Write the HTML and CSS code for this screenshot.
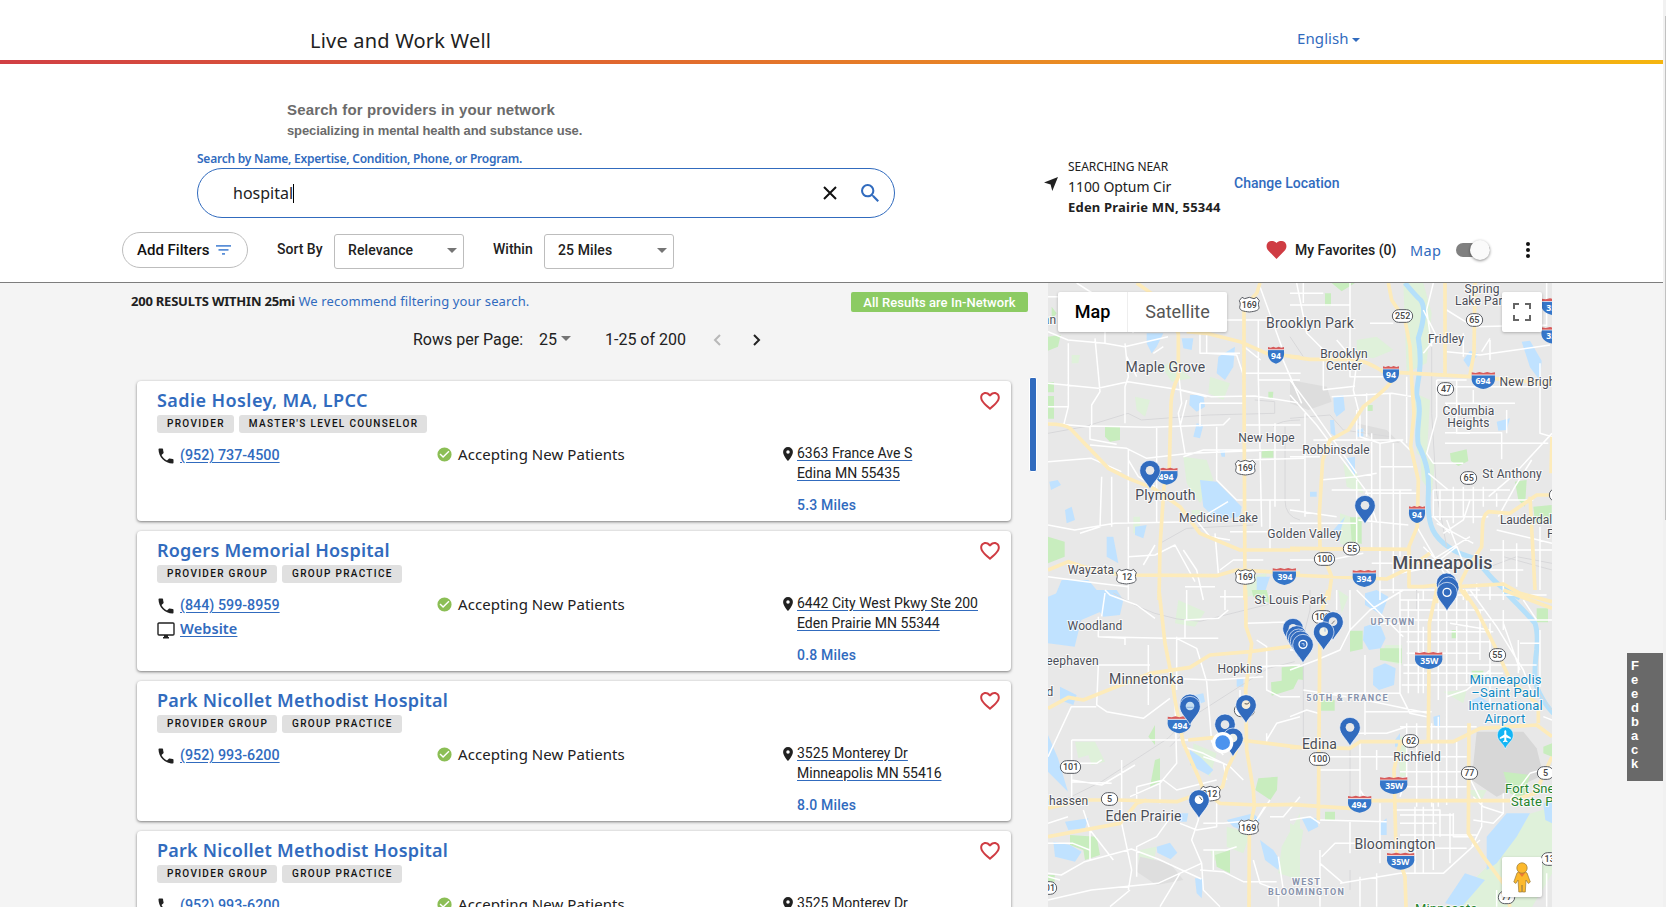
FILE: index.html
```html
<!DOCTYPE html>
<html lang="en">
<head>
<meta charset="utf-8">
<title>Live and Work Well</title>
<link rel="stylesheet" href="styles.css">
</head>
<body>
<svg class="defs" aria-hidden="true">
  <symbol id="phone" viewBox="0 0 24 24"><path d="M6.6 10.8c1.4 2.8 3.8 5.1 6.6 6.6l2.2-2.2c.3-.3.7-.4 1-.2 1.1.4 2.3.6 3.6.6.6 0 1 .4 1 1V20c0 .6-.4 1-1 1C10.600 21 3 13.400 3 4c0-.6.4-1 1-1h3.500c.6 0 1 .4 1 1 0 1.300.2 2.500.6 3.600.1.300 0 .7-.2 1z"/></symbol>
  <symbol id="check" viewBox="0 0 24 24"><path d="M12 2a10 10 0 1 0 0 20 10 10 0 0 0 0-20zm-2 15-5-5 1.400-1.400 3.600 3.600 7.600-7.600L19 8z"/></symbol>
  <symbol id="place" viewBox="5 2 14 20"><path d="M12 2a7 7 0 0 0-7 7c0 5.250 7 13 7 13s7-7.750 7-13a7 7 0 0 0-7-7zm0 9.500a2.500 2.500 0 1 1 0-5 2.500 2.500 0 0 1 0 5z"/></symbol>
  <symbol id="monitor" viewBox="0 0 18 17"><path d="M2 1h14a1 1 0 0 1 1 1v10a1 1 0 0 1-1 1H2a1 1 0 0 1-1-1V2a1 1 0 0 1 1-1z" fill="none" stroke="#212121" stroke-width="1.400"/><path d="M7 13h4v2h1v1.500H6V15h1z"/></symbol>
  <symbol id="heart-o" viewBox="2 3 20 18.350"><path d="M16.500 3c-1.740 0-3.410.81-4.500 2.090C10.910 3.810 9.240 3 7.500 3 4.420 3 2 5.420 2 8.500c0 3.780 3.400 6.860 8.550 11.540L12 21.350l1.450-1.320C18.600 15.360 22 12.280 22 8.500 22 5.420 19.580 3 16.500 3zm-4.400 15.550-.1.1-.1-.1C7.140 14.240 4 11.390 4 8.500 4 6.500 5.500 5 7.500 5c1.540 0 3.040.99 3.570 2.360h1.870C13.460 5.990 14.960 5 16.500 5c2 0 3.500 1.500 3.500 3.500 0 2.890-3.140 5.740-7.900 10.050z"/></symbol>
</svg>

<header class="top">
  <div class="brand">Live and Work Well</div>
  <div class="lang">English<i class="caret"></i></div>
</header>
<div class="rainbow"></div>

<section class="search">
  <div class="search-left">
    <h1 class="headline">Search for providers in your network</h1>
    <p class="subline">specializing in mental health and substance use.</p>
    <div class="field-label">Search by Name, Expertise, Condition, Phone, or Program.</div>
    <div class="field"><span class="query">hospital</span><span class="cursor"></span>
      <svg class="clear" viewBox="0 0 14 14"><path d="M1 1l12 12M13 1L1 13"/></svg>
      <svg class="magnify" viewBox="3 3 17.500 17.500"><path d="M15.500 14h-.79l-.28-.27A6.470 6.470 0 0 0 16 9.500 6.500 6.500 0 1 0 9.500 16c1.610 0 3.090-.59 4.230-1.570l.27.28v.79l5 4.990L20.490 19zm-6 0A4.500 4.500 0 1 1 14 9.500 4.490 4.490 0 0 1 9.500 14z"/></svg>
    </div>
    <div class="filters">
      <button class="add">Add Filters<svg viewBox="0 0 15 10"><path d="M0 0h15v1.700H0zM2.500 4h10v1.700h-10zM6 8h3v1.700H6z"/></svg></button>
      <span class="flabel sort">Sort By</span><div class="select">Relevance<i class="tri"></i></div>
      <span class="flabel within">Within</span><div class="select">25 Miles<i class="tri"></i></div>
    </div>
  </div>
  <div class="search-right">
    <div class="location">
      <svg class="arrow" viewBox="0 0 14 14"><path d="M14 0L8.300 14 6.600 7.400 0 5.500z"/></svg>
      <div class="near"><div class="near-t">SEARCHING NEAR</div><div class="near-a">1100 Optum Cir</div><div class="near-c">Eden Prairie MN, 55344</div></div>
      <a class="change">Change Location</a>
    </div>
    <div class="tools">
      <svg class="heart" viewBox="0 0 20 18"><path d="M10 18L1.500 9.300C-.7 6.500-.3 2.500 2.300.8 5-.8 8.200-.1 10 2.100 11.800-.1 15-.8 17.700.8c2.600 1.700 3 5.700.8 8.500z"/></svg>
      <span class="fav">My Favorites (0)</span><span class="map-l">Map</span>
      <span class="toggle"><i></i></span>
      <span class="dots"><i></i><i></i><i></i></span>
    </div>
  </div>
</section>

<main class="results">
  <div class="list">
    <div class="summary"><div class="count"><b>200 RESULTS WITHIN 25mi</b> <span>We recommend filtering your search.</span></div><div class="badge">All Results are In-Network</div></div>
    <div class="pager"><span class="rpp">Rows per Page:</span><span class="num">25</span><i class="tri"></i><span class="range">1-25 of 200</span>
      <svg class="prev" viewBox="0 0 8 12"><path d="M7 1L2 6l5 5"/></svg><svg class="next" viewBox="0 0 8 12"><path d="M1 1l5 5-5 5"/></svg></div>
    <div class="cards">
      <article class="card">
        <svg class="fav-o"><use href="#heart-o"/></svg>
        <h2 class="wide">Sadie Hosley, MA, LPCC</h2>
        <div class="tags"><span>PROVIDER</span><span>MASTER'S LEVEL COUNSELOR</span></div>
        <div class="info"><div class="contact"><div class="row"><svg class="ph"><use href="#phone"/></svg><a>(952) 737-4500</a></div></div>
          <div class="accept"><svg><use href="#check"/></svg>Accepting New Patients</div>
          <div class="addr"><svg><use href="#place"/></svg><div><a>6363 France Ave S</a><a>Edina MN 55435</a><b>5.3 Miles</b></div></div></div>
      </article>
      <article class="card">
        <svg class="fav-o"><use href="#heart-o"/></svg>
        <h2>Rogers Memorial Hospital</h2>
        <div class="tags"><span>PROVIDER GROUP</span><span>GROUP PRACTICE</span></div>
        <div class="info"><div class="contact"><div class="row"><svg class="ph"><use href="#phone"/></svg><a>(844) 599-8959</a></div><div class="row web"><svg class="mon"><use href="#monitor"/></svg><a>Website</a></div></div>
          <div class="accept"><svg><use href="#check"/></svg>Accepting New Patients</div>
          <div class="addr"><svg><use href="#place"/></svg><div><a>6442 City West Pkwy Ste 200</a><a>Eden Prairie MN 55344</a><b>0.8 Miles</b></div></div></div>
      </article>
      <article class="card">
        <svg class="fav-o"><use href="#heart-o"/></svg>
        <h2>Park Nicollet Methodist Hospital</h2>
        <div class="tags"><span>PROVIDER GROUP</span><span>GROUP PRACTICE</span></div>
        <div class="info"><div class="contact"><div class="row"><svg class="ph"><use href="#phone"/></svg><a>(952) 993-6200</a></div></div>
          <div class="accept"><svg><use href="#check"/></svg>Accepting New Patients</div>
          <div class="addr"><svg><use href="#place"/></svg><div><a>3525 Monterey Dr</a><a>Minneapolis MN 55416</a><b>8.0 Miles</b></div></div></div>
      </article>
      <article class="card">
        <svg class="fav-o"><use href="#heart-o"/></svg>
        <h2>Park Nicollet Methodist Hospital</h2>
        <div class="tags"><span>PROVIDER GROUP</span><span>GROUP PRACTICE</span></div>
        <div class="info"><div class="contact"><div class="row"><svg class="ph"><use href="#phone"/></svg><a>(952) 993-6200</a></div></div>
          <div class="accept"><svg><use href="#check"/></svg>Accepting New Patients</div>
          <div class="addr"><svg><use href="#place"/></svg><div><a>3525 Monterey Dr</a></div></div></div>
      </article>
    </div>
  </div>
  <div class="rail"><div class="thumb"></div></div>
  <div class="map">
    <svg class="canvas" viewBox="1048 283 504 624">
      <defs>
        <g id="pin"><path d="M0 85C-9 66-31 50-31 30a31 31 0 0 1 62 0C31 50 9 66 0 85z" class="pinb"/></g>
        <g id="ints"><path d="M-24 -14h48v6c2 20-8 32-24 36-16-4-26-16-24-36z" fill="#3576c9"/><path d="M-24 -14v-8l8 2 8-3 8 3 8-3 8 3 8-2v8z" fill="#d75b5b"/><path d="M-24 -14h48" stroke="#fff" stroke-width="2"/></g>
        <g id="us"><path d="M-22 -22l8 4 14-4 14 4 8-4 8 10c-5 10-2 14-1 20 0 10-12 12-29 14-17-2-29-4-29-14 1-6 4-10-1-20z" class="shield"/></g>
      </defs>
      <rect x="1048" y="283" width="504" height="624" fill="#e8e8e8"/>

      <!-- terrain: parks and water -->
      <g transform="translate(1040 280) scale(.33333)">
        <path class="lg" d="M430 530l70 10 20 60-40 70-40-60zM510 290l60 20-20 50-45-20zM285 350l45 10-15 50-25-20zM95 225l25 0-5 25-20 0zM365 260l30-15 60 50-60 10zM455 690l30 0-5 40-25-10zM280 710h20v50h-20zM620 890l60-10-10 60-50 10z"/>
        <path class="pk" d="M24 170l38-5-8 35-30 12zM24 307h18v30H24zM24 348h18v68H24zM195 440h45v40l-30 5-15-15zM24 770l50 15v45l-50 20zM35 80l15 20-15 20zM665 508h35v25h-35zM685 335h15l-2 22-13-4z"/>
        <path class="wt" d="M535 230l50-30-5 60-25 40-25-20zM450 345h40l5 35-25 15-22-20zM320 160l50 0-20 40-15 20-15-30zM425 175l35 0-5 35-25-5zM480 600l50 5 75 75-5 30-70 10-40-40zM470 430l20 5-10 40-20-5zM75 690l20-10 10 40-25 10zM28 605l25-5 10 15-30 15zM285 740l35-5-10 40-25-10zM200 770l20 0 15 80-35-20zM65 900l80 0 50 60H40zM650 890l40 0-20 60-20-20zM540 510l15 0 0 20-10 0z"/>
      </g>
      <g transform="translate(1290 280) scale(.33333)">
        <path d="M0 300l110 20 15 45-70 25L0 370zM200 430l90 20 40 40-80-10z" fill="#ddd"/>
        <path class="lg" d="M200 180l60-10 50 40-60 25-50-10zM340 9h60l25 90-15 150-60 30zM375 340l45 20-10 180-30-20zM390 520l45 30-10 90-30-40zM160 550l40 30 20 60-50-20zM150 700l60 20v100l-60-30z"/>
        <path class="pk" d="M125 9h70l-40 25zM480 520l50-12 5 35-30 15-22-15zM675 605l35-5-5 80-20-20zM180 712h35v80l-30-10zM730 680l55-5v55h-50zM232 375h16v18h-16zM105 40h18v38h-18z"/>
        <path class="wt" d="M130 350l30-5 5 45-25 20-8-15zM120 420l12 0 5 50-15-10zM695 185l25-3 35 60-5 60-30-40zM520 240l20-28 25 10-30 40zM620 425l40-10-10 35-25 2zM165 535l30-5 0 60-15-30zM200 450l20-5 0 25-18 0zM60 635h20v15H60zM130 750l35-40-20 60-10 10z"/>
        <path class="riv" d="M345 9q25 30 40 45c30 20 10 90 0 120 15 90-5 130-5 170 20 50-5 100 5 150 30 60 32 100 30 150-5 100 20 130 65 160 40 30 80 20 90 50 30 30 40 60 120 100"/>
      </g>
      <g transform="translate(1040 590) scale(.33333)">
        <path class="lg" d="M105 455l60 0 30 60-40 10-10-30-30 10zM415 30l80 35-30 45-60-10zM300 780l50-10-10 50-45-10zM460 460l70 30-20 70-50-50zM725 770l55-100v200l-65-20zM510 780l40 0 10 40-40-10zM560 710l70 20-20 60-50-20z"/>
        <path class="pk" d="M725 232l55-5v30l-20 40-65 20-2-40 32-5zM655 565l58-5-2 40-20 30-45-30zM325 440l20-35 0 60zM345 510l15-5 0 70-30 15zM90 735l80 5 10 55-45 15-5-30-40-15zM525 795l45-15 0 70-40-20zM24 855h20v20H24zM635 0l45 0 10 40-50-20z"/>
        <path class="wt" d="M24 20l50-20h120l0 60-70 30-20 80-80-10zM60 290l50 25-10 30-40-15zM130 0h100l20 30-10 45-50 5zM24 435l30 70 30 100-60-60zM450 480l30 20 40 40-15 15-55-30zM40 755l50 10 35 20-20 30-60-15zM350 770l40-12 22 30-20 20-40-20zM660 750l40 30 20 30-5 30-40-30zM560 690l80-20 20 20-30 40-50-20zM465 315l25-5 5 25-25 10zM590 265h20v25h-20zM465 865h25l-5 60-15-15zM75 695l70-10-10 30-50 5zM415 670l30 0-5 25-25 0z"/>
        <path d="M300 800l90 20 40 50-80 15-60-40z" fill="#dedede"/>
      </g>
      <g transform="translate(1290 590) scale(.33333)">
        <path d="M560 425h140l40 50 20 80-140 65-75-50z" fill="#d7d7d7"/>
        <path class="lg" d="M0 700l40 20-10 60-30 90zM285 165h50v60l-60-15zM530 600l60 0-20 40zM500 951l60-90 100-100 60-90 66-20v200l-60 100zM320 440l30 0 0 120-20 0zM460 305l70-5-10 40zM145 0l30 20-20 50z"/>
        <path class="pk" d="M180 122h38v55l-38 8zM0 230l40 0 0 40-40-5zM270 175h65v45l-65-10zM92 330h42v32H92zM740 55h34v42h-34zM545 242h35v22h-35zM640 545l80 10-20 75-40-20zM760 470l26-10v40l-26-10zM105 665h30v25h-30zM485 120h15v25h-15z"/>
        <path class="wt" d="M222 110l45-15 20 50-15 30-35 5-18-30zM250 235l35-15 32 15-5 50-45 15-18-15zM225 10l35-10 35 20-20 55-50-30zM430 380l20-5 0 40-18-10zM545 330l25-10 30 20-20 20-30 0zM590 740l60-70 70 0-40 70-60 80-30 20zM465 940l60-90 60 20-70 81zM35 685l45 0 5 25-30 15zM270 700l20-15 0 50-20 0zM760 640l26-10v70l-20-10zM315 450l15-20 0 40-15 0z"/>
        <path class="riv" d="M640 0q80 80 95 100 10 30 5 80-10 80 0 110 20 50 50 80"/>
      </g>

      <!-- local streets -->
      <g class="st" transform="translate(1040 280) scale(.33333)">
        <path class="rail-l" d="M24 460l110-20 130-40 40 20 200-15 200-5 0-35-60-5M700 440q20-20 80-20M735 440v220q0 50 45 60M360 790l80-45 200-10"/>
        <path d="M24 310l150 15 90-20 160 25 90 20 130-2 130 20M24 155l60 25 110 10 60 10 130-30M85 190v190l-15 60M255 190l10 100-10 30v110M155 435v-60l25-40-15-160M110 9l140 90 30 60M24 50h100l50 60M150 438l180 4 220-8 20-20M150 438l0 40 80 15M24 545l130-10 90 40M150 495l110 10 60 30 130-15 250-10M265 510v220M350 440v290M24 735l80 15 120-20 240-5 100-60M185 590l-5 150-60 20M215 590v150M265 540l30 50 50 30M265 740v90l80-5 60-30 60 110M265 830v130M310 855l35-60M430 810l40 60 20 90M430 530l60-20 300 0M530 440v160l60 60h190M500 160l0 60 90 5 20 60M560 120h220M480 160v60h120M612 280h170M655 120v180h125M655 290l10 450M705 430v250M725 230l60 140M612 540l180-5M660 20l65 180M415 270l10 100-10 30 20 120M420 330l80 20M440 360l-20 80M260 230l30 60M340 220l30-20M480 370h130M480 370v70M612 435h170M24 430l126 10M570 780l-60-10-50-60M570 755h200M690 660v150M540 870l40-30h90M24 890l150 20 90 10M435 920h90M525 760l10 120M24 380h60M612 200l50 40M195 100v90"/>
      </g>
      <g class="st" transform="translate(1290 280) scale(.33333)">
        <path class="rail-l" d="M0 415l120-10 40 45 140 20M425 200v200l15 240 30 160M640 830l146 40M600 860l80-30 106 20M0 170l40 60"/>
        <path d="M40 9v60M0 40h100M180 9v220M0 75h180M20 9l30 150 50 50 0 90 0 30 95-10M140 180l60 70-10 80 20 80 0 60 60 20 60-10 30 30M0 345l80 90 150 200 30 90M0 300l60 80 140 200M45 400v310M0 530h90M70 480h270M245 460v350M270 490v470M310 490v450M330 630v200M90 600l110-10 60-10M125 630h240M200 600v200M225 640h160M270 560h100M125 350l180-10 65 10M230 340v130M300 340v140M430 9l-20 80 15 110M400 90l40 80-40 50M470 90l80 50 220-5M470 215l100 10 210-30M520 160v70M600 180v60M575 215l25-40M440 300h90M440 300v110l-30 110 20 30 90 0M500 300l0 160h40M465 320h280M465 370h210M550 330v40M465 458h170v80M465 490h310M750 250v210l36 10M786 460l-120 130-70 60M650 390l0 70M725 540l-50 80-50 90M430 630h230M430 660h300M430 630l0 80 50 50M450 630v90M490 620v110M520 620v90M550 620v110M580 620v60M620 640v40M415 580l60 50M425 710h170M440 730l110 60M460 760l60-40 20-60M380 740l100 170M400 800l100 100M430 860l-100 20M470 720l50 130M540 770l-130 80M500 800l-90 70M0 840l120 0 100-20M245 850h150M205 720l150 15M0 690l140 20M0 730h200M400 930v30M440 930v30M480 930v30M520 930v30M560 910v50M600 910v50M640 920v40M270 930h300M440 945h330M620 750l166 40M640 780v140M680 790v130M600 810h186M600 870h100M750 740v190M200 480v-90M180 240l0 50 100 0M470 390l0-20M350 290v200M240 130h70M770 9v130"/>
      </g>
      <g class="st" transform="translate(1040 590) scale(.33333)">
        <path class="rail-l" d="M220 9q120 80 260 85l300-75M24 655l160-80 200-130 50-50 250-160 80-20M390 470l60-60"/>
        <path d="M195 0l15 15 80 30 55 40M195 9l-10 70M175 80v60l80 5 0 20M175 140l200 5 160 0M175 225h155M175 225l-5 120 30 20 110 20 80-60M24 500l70-150 75 0M325 165v180M380 265l140 5 150-10M410 145l60 30 30 100 15 180 35 40M435 145l0-55 100-5 30-25M440 0v90M555 0v60M620 100l160-5M540 20h80M410 140v160M405 330l5 190-50 60-90 40M95 450h350M95 450l0 120 90 15 100-60M95 575l120 5M100 520h70l15-10M245 510v190l30 140-10 60M24 850l40 5 70-40 140-38 80 30 130 60M24 930l130-30 200-20 130-60M60 870l-36-10M24 760h75l50 20M290 590l80-20 40 30 80-20 40-10M290 590v40M360 580v60M430 470l60 20 80 40 40 40M560 570l-10-50-60-20M475 640l0 50-20 60 30 70 5 80 50 50M420 700l50 20 60-10 0-70M290 860v-90l60-30 50-70M490 780h70l30-10M490 700h60l100-10 40-60M480 840l70 5 60 30 100 0M520 780v60M640 810l20 70 55 20v50M680 640l-30 50M690 680h40l50-60M715 800l15 100M640 230l140-5M650 150l30 20 0 130 40 20 60 0M680 450l30-50 70-20M680 430v30M610 230h70M600 300v40M150 720l70 90M130 660l20 60v90M24 700l60-20M95 560v80M420 850l-60 100M270 900l-60 50"/>
      </g>
      <g class="st" transform="translate(1290 590) scale(.33333)">
        <path class="rail-l" d="M60 0v60l-30 120M40 140v300M180 460v200M380 0l0 60M740 300l46 60M180 840v60"/>
        <path d="M0 240l80-30 70-30 30-60 60-60 100-60M180 0v120M200 0l80 80 60 60M330 0v310l30 60 50 10M355 30v280M385 10v300M445 30v300M470 30v420M500 0v300M530 0v280M570 60v150M600 100v240M640 60v60M685 150v100M330 30h160M330 60h250M330 90h420M330 125h280M350 155h250M350 190h220M340 225h400M340 250h300M335 285h320M225 195v240M225 365h200M130 310h200M225 330l190 40M200 430h90l60-20M350 400v160l-20 60M380 400v250M445 380v270M470 455v190M500 455v170M90 500h300M90 540h120v60l20 30M210 450v180M260 540v-60M330 500h200M330 545h200M330 590h200M90 690l200 5M95 800l40-40h150M180 690v100M270 640v180M310 660h140v80M375 650v200M400 650v200M430 640v200M480 670v150M330 675h160M330 700h110M330 850l130 0 110-100M490 670v70l50 0M330 735h230M330 775h200M575 640v70l-30 60M550 620l30 30 60 20 0-60M550 690l60 10 30-30M537 560l40 80M0 690l60-10 30 20M90 780v170M90 820l70 60M150 880l180-30M210 860v90M260 850v100M0 380l50-20 35 10M40 300l130 20M540 0l80 110 80 130 30 80M640 100l50 140M480 100l120 20M700 30l40 60h46M750 120v170M690 160h60M600 200v60M600 240l-70 60-60 20M0 180h60M140 0v60M690 340h60M330 410h230M660 630l60-80 66-20M660 850l50-30M770 850v100M620 900v50M400 110v200M425 400v250M260 100h70M760 380l26 10"/>
      </g>

      <!-- highways -->
      <g class="hw" transform="translate(1040 280) scale(.33333)">
        <path d="M290 9l50 35 75 116v130q-20 40-22 80l-5 190-16 60-12 180-3 160M440 155l60 5 100 25 80 35 100 12M660 9l-10 31-38 40v220l3 660M24 432q50 0 66 13l115 120 60 30 75 30 80 55 60 80 120 50 180 0M24 870l61-25 45 15 110 25 290 2 60-17 190 10"/>
      </g>
      <g class="hw" transform="translate(1290 280) scale(.33333)">
        <path d="M295 9l10 51 40 60 15 80 5 100 7 100-10 100 23 100-3 140-25 60v120l43 0 40-5M0 230l60 8h130q40 5 90 37l260 15 246 20M305 300q-5 20-85 80l-45 70-55 30-22 60-10 160 2 100 35 90-10 70M465 9v276M555 9l-3 211-12 65M786 470l-3 110M786 645h-46l-80 55-65-5q-15 10-17 35l-3 70-45 70-25 50-65 0M720 650l15 280M0 805l355 3M0 885l290 12 65-32 65-45M505 920l135-8 50 28 96 25M440 910v60M505 920l30 40"/>
      </g>
      <g class="hw" transform="translate(1040 590) scale(.33333)">
        <path d="M357 0l18 160 20 100 10 70 25 130 45 100 15 40 50 40 110 5 130-2M24 355l61-33 45 8 200-80 120-18 60-37 120-10 150-20M617 0l1 110 17 50-18 140 3 180 20 120 3 50-15 70-1 231M445 450l75-7 80 7 180 22M590 480l-30 60-12 50-33 20M24 655l106-25h100l180 5 70-25M24 740l216-40 50-60 30-10"/>
      </g>
      <g class="hw" transform="translate(1290 590) scale(.33333)">
        <path d="M115 0l-25 80-5 610M0 472l180 3 30-20h280l80-40 170-10 46 35M0 643l180 12 40-23h440M440 0l-22 100-3 350M415 455l-85 5-18 80 6 240 27 80 3 91M520 0l40 60 60 120 40 90 85 75v55M537 400l-2 330 45 70 60 80 20 71M640 0l80 30 66 25M786 500l-50 110-66 20"/>
      </g>

      <!-- route shields -->
      <g class="sh" transform="translate(1040 280) scale(.33333)">
        <use href="#us" x="628" y="74"/><text x="628" y="84">169</text>
        <use href="#us" x="616" y="563"/><text x="616" y="573">169</text>
        <use href="#us" x="616" y="891"/><text x="616" y="901">169</text>
        <use href="#us" x="259" y="890"/><text x="261" y="900">12</text>
        <g class="in"><use href="#ints" x="708" y="223"/><text x="708" y="237">94</text>
        <use href="#ints" transform="translate(380 586) scale(1.350 1)"/><text x="378" y="600">494</text>
        <use href="#ints" transform="translate(733 887) scale(1.450 1)"/><text x="735" y="900">394</text></g>
      </g>
      <g class="sh" transform="translate(1290 280) scale(.33333)">
        <rect class="shield" x="307" y="89" width="61" height="38" rx="19"/><text x="338" y="117">252</text>
        <rect class="shield" x="529" y="101" width="49" height="38" rx="19"/><text x="553" y="130">65</text>
        <rect class="shield" x="442" y="308" width="49" height="38" rx="19"/><text x="468" y="337">47</text>
        <rect class="shield" x="511" y="575" width="49" height="38" rx="19"/><text x="536" y="604">65</text>
        <rect class="shield" x="160" y="787" width="49" height="38" rx="19"/><text x="186" y="816">55</text>
        <rect class="shield" x="73" y="818" width="61" height="38" rx="19"/><text x="104" y="847">100</text>
        <rect class="shield" x="778" y="626" width="49" height="38" rx="19"/>
        <g class="in"><use href="#ints" x="303" y="281"/><text x="303" y="295">94</text>
        <use href="#ints" transform="translate(580 299) scale(1.450 1)"/><text x="579" y="313">694</text>
        <use href="#ints" x="381" y="701"/><text x="381" y="715">94</text>
        <use href="#ints" transform="translate(223 893) scale(1.450 1)"/><text x="222" y="906">394</text>
        <use href="#ints" transform="translate(793 78) scale(1.600 1)"/><text x="796" y="92">35W</text>
        <use href="#ints" transform="translate(793 164) scale(1.600 1)"/><text x="796" y="178">35W</text></g>
      </g>
      <g class="sh" transform="translate(1040 590) scale(.33333)">
        <rect class="shield" x="61" y="512" width="61" height="38" rx="19"/><text x="92" y="541">101</text>
        <rect class="shield" x="184" y="608" width="49" height="38" rx="19"/><text x="209" y="637">5</text>
        <rect class="shield" x="-10" y="875" width="60" height="38" rx="19"/><text x="22" y="904">101</text>
        <rect class="shield" x="583" y="342" width="60" height="38" rx="19"/>
        <use href="#us" x="511" y="611"/><text x="509" y="621">212</text>
        <use href="#us" x="626" y="712"/><text x="626" y="723">169</text>
        <g class="in"><use href="#ints" transform="translate(418 402) scale(1.450 1)"/><text x="420" y="417">494</text></g>
      </g>
      <g class="sh" transform="translate(1290 590) scale(.33333)">
        <rect class="shield" x="67" y="62" width="61" height="38" rx="19"/><text x="97" y="91">100</text>
        <rect class="shield" x="598" y="176" width="49" height="38" rx="19"/><text x="622" y="205">55</text>
        <rect class="shield" x="337" y="434" width="49" height="38" rx="19"/><text x="363" y="463">62</text>
        <rect class="shield" x="58" y="488" width="61" height="38" rx="19"/><text x="89" y="517">100</text>
        <rect class="shield" x="514" y="530" width="49" height="38" rx="19"/><text x="538" y="559">77</text>
        <rect class="shield" x="742" y="530" width="49" height="38" rx="19"/><text x="767" y="559">5</text>
        <rect class="shield" x="754" y="788" width="49" height="38" rx="19"/><text x="779" y="817">13</text>
        <rect class="shield" x="625" y="903" width="49" height="38" rx="19"/><text x="650" y="931">77</text>
        <g class="in"><use href="#ints" transform="translate(416 209) scale(1.700 1)"/><text x="418" y="222">35W</text>
        <use href="#ints" transform="translate(311 584) scale(1.700 1)"/><text x="313" y="598">35W</text>
        <use href="#ints" transform="translate(332 811) scale(1.700 1)"/><text x="331" y="825">35W</text>
        <use href="#ints" transform="translate(209 640) scale(1.450 1)"/><text x="207" y="655">494</text></g>
      </g>

      <!-- place names -->
      <g class="nm">
        <text class="md" x="1165.500" y="372">Maple Grove</text><text class="md" x="1310" y="328">Brooklyn Park</text>
        <text x="1266.500" y="442">New Hope</text><text class="md" x="1165.500" y="500">Plymouth</text>
        <text x="1218.500" y="522">Medicine Lake</text><text x="1304.500" y="538">Golden Valley</text>
        <text x="1091" y="574">Wayzata</text><text x="1290.500" y="604">St Louis Park</text>
        <text x="1049.500" y="324">an</text><text x="1482" y="293">Spring</text><text x="1482" y="305">Lake Park</text>
        <text x="1446" y="343">Fridley</text><text x="1344" y="358">Brooklyn</text><text x="1344" y="370">Center</text>
        <text class="s" x="1499.500" y="386">New Brighton</text><text x="1468.500" y="415">Columbia</text><text x="1468.500" y="427">Heights</text>
        <text x="1336" y="454">Robbinsdale</text><text x="1512" y="478">St Anthony</text>
        <text class="s tight" x="1500" y="524">Lauderdale</text><text class="s" x="1547" y="538">Falcon</text>
        <text class="lg-t" x="1442.500" y="568.500">Minneapolis</text>
        <text x="1095" y="630">Woodland</text><text x="1068.500" y="665">Deephaven</text>
        <text class="md" x="1146.500" y="684">Minnetonka</text><text x="1240" y="673">Hopkins</text>
        <text x="1050" y="696">d</text><text x="1054.500" y="805">Chanhassen</text><text class="md" x="1143.500" y="821">Eden Prairie</text>
        <text class="md" x="1319.500" y="749">Edina</text><text x="1417" y="761">Richfield</text><text class="md" x="1395" y="849">Bloomington</text>
        <g class="area"><text x="1393" y="625">UPTOWN</text><text x="1347.500" y="700.500">50TH &amp; FRANCE</text><text x="1306.500" y="885">WEST</text><text x="1306.500" y="895">BLOOMINGTON</text></g>
        <g class="air"><text x="1505.500" y="683.500">Minneapolis</text><text x="1505.500" y="696.500">–Saint Paul</text><text x="1505.500" y="709.500">International</text><text x="1505" y="722.500">Airport</text></g>
        <g class="green"><text class="s" x="1505" y="792.500">Fort Snelling</text><text class="s" x="1511" y="805.500">State Park</text><text class="s" x="1415" y="913">Minnesota</text></g>
      </g>
      <g transform="translate(1505.300 737)"><path d="M0 12C-2 6-8 4-8-2a8 8 0 0 1 16 0c0 6-6 8-8 14z" fill="#12b5f5" stroke="#fff" stroke-width=".5"/><path d="M0-7l1 1v3.500l4.500 3V2L1 .5v2.800L2.300 4.500v.8L0 4.700l-2.300.6v-.8L-1 3.300V.5L-5.500 2V.500L-1-2.500V-6z" fill="#fff"/></g>

      <!-- provider pins -->
      <g transform="translate(1040 280) scale(.33333)"><use href="#pin" x="330" y="542"/><circle cx="330" cy="571" r="13" fill="#e8e8e8"/></g>
      <g transform="translate(1290 280) scale(.33333)">
        <use href="#pin" x="225" y="647"/><circle cx="225" cy="676" r="13" fill="#e8e8e8"/>
        <use href="#pin" x="470" y="880"/><use href="#pin" x="476" y="892"/><use href="#pin" x="471" y="908"/><circle class="ring" cx="471" cy="937" r="12"/>
      </g>
      <g transform="translate(1040 590) scale(.33333)">
        <use href="#pin" x="450" y="313"/><use href="#pin" x="450" y="320"/><circle cx="450" cy="348" r="13" fill="#c6def1"/><path d="M439 352h22" stroke="#6b9ad4" stroke-width="2"/>
        <use href="#pin" x="618" y="315"/><circle cx="618" cy="344" r="13" fill="#f5edda"/><path d="M614 341q8 4 14-3" fill="none" stroke="#555" stroke-width="3"/>
        <use href="#pin" x="555" y="373"/><circle cx="555" cy="404" r="13" fill="#e8e8e8"/>
        <use href="#pin" x="579" y="415"/><circle cx="579" cy="444" r="13" fill="#eef0e8"/>
        <circle cx="548" cy="458" r="32" fill="#fff"/><circle cx="548" cy="458" r="22" fill="#4c93ee"/>
        <use href="#pin" x="477" y="600"/><circle cx="477" cy="629" r="13" fill="#fff"/><path d="M478 620l8 10" stroke="#555" stroke-width="3"/>
        <use href="#pin" x="759" y="86"/><circle cx="759" cy="115" r="13" fill="#e8e8e8"/><use href="#pin" x="770" y="108"/><use href="#pin" x="776" y="118"/><use href="#pin" x="782" y="124"/>
      </g>
      <g transform="translate(1290 590) scale(.33333)">
        <use href="#pin" x="39" y="134"/><circle class="ring" cx="39" cy="163" r="12"/><path d="M35 161h7v7" class="ring thin"/>
        <use href="#pin" x="129" y="66"/><circle cx="129" cy="95" r="13" fill="#e8e8e8"/><path d="M125 102l9-10" stroke="#777" stroke-width="3"/>
        <use href="#pin" x="101" y="96"/><circle cx="101" cy="125" r="13" fill="#f2f2e8"/><path d="M105 115v10" fill="none" stroke="#6c9cdb" stroke-width="2"/>
        <use href="#pin" x="180" y="383"/><circle cx="180" cy="412" r="13" fill="#e8e8e8"/>
      </g>
    </svg>
    <div class="map-type"><span class="on">Map</span><span>Satellite</span></div>
    <div class="ctl full"><svg viewBox="0 0 18 18"><path d="M0 0h6v2H2v4H0zM12 0h6v6h-2V2h-4zM0 12h2v4h4v2H0zM16 12h2v6h-6v-2h4z"/></svg></div>
    <div class="ctl peg"><svg viewBox="0 0 18 31"><path d="M4 11L.8 20l2 1.500L5 18l.8 12h3l.2-7 .3 7h3L13 18l2.300 3.500 2-1.500L14 11c-2-2-8-2-10 0z" fill="#fcb92c" stroke="#9a7a36" stroke-width=".7"/><path d="M5.500 10.500h7L9 15z" fill="#ec7a35"/><circle cx="9" cy="6" r="5.200" fill="#fcb92c" stroke="#9a7a36" stroke-width=".7"/></svg></div>
  </div>
</main>
<div class="feedback"><span>F</span><span>e</span><span>e</span><span>d</span><span>b</span><span>a</span><span>c</span><span>k</span></div>
<div class="scroll"><i></i></div>
</body>
</html>
```
FILE: styles.css
```css
* { box-sizing: border-box; }
body { margin: 0; width: 1666px; height: 907px; overflow: hidden; position: relative; background: #fff; color: #212121; font-family: "Noto Sans", "Open Sans", sans-serif; }
.defs { position: absolute; width: 0; height: 0; }
svg { display: block; flex: none; }
h1, h2, p { margin: 0; }

.top { height: 60px; display: flex; padding-left: 310px; }
.brand { width: 987px; padding-top: 27px; font-size: 20px; line-height: 28px; letter-spacing: .2px; }
.lang { padding-top: 27px; font-size: 15px; line-height: 22px; letter-spacing: .1px; color: #316bbe; display: flex; }
.caret { margin: 11px 0 0 3px; width: 0; height: 0; border: 4px solid transparent; border-top-color: #316bbe; border-bottom: 0; }
.rainbow { height: 4px; width: 1663px; background: linear-gradient(90deg, #d13f44 0, #e0662f 36%, #e98a24 63%, #f5b50f); }

.search { height: 219px; display: flex; border-bottom: 1px solid #7d7d7d; }
.search-left { width: 1044px; padding: 36px 0 0 122px; }
.headline { padding-left: 165px; font: bold 15px/20px "Liberation Sans", Arial, sans-serif; letter-spacing: .15px; color: #6b6b6b; }
.subline { padding-left: 165px; font: bold 13px/22px "Liberation Sans", Arial, sans-serif; letter-spacing: -.11px; color: #6b6b6b; }
.field-label { margin: 8px 0 1px 75px; height: 17px; font-size: 12px; line-height: 17px; font-weight: 600; letter-spacing: -.24px; color: #316bbe; white-space: nowrap; }
.field { margin-left: 75px; width: 698px; height: 50px; border: 1px solid #316bbe; border-radius: 25px; display: flex; align-items: center; padding: 0 15px 0 35px; }
.query { font-size: 16px; }
.cursor { width: 1px; height: 19px; background: #000; margin-right: auto; }
.clear { width: 14px; height: 14px; fill: none; stroke: #111; stroke-width: 2; }
.magnify { width: 18px; height: 18px; margin-left: 24px; fill: #316bbe; }
.filters { display: flex; padding-top: 14px; font: 500 15px/18px Roboto, sans-serif; }
.add { width: 126px; height: 36px; border: 1px solid #bdbdbd; border-radius: 18px; background: #fff; display: flex; align-items: center; padding: 0 0 0 14px; font: 500 15px/18px Roboto, sans-serif; color: #111; }
.add svg { width: 15px; height: 10px; margin-left: 6px; fill: #5a8fd8; }
.flabel { padding-top: 8px; font-size: 14px; }
.sort { width: 57px; margin-left: 29px; }
.within { width: 51px; margin-left: 29px; }
.select { width: 130px; height: 35px; margin-top: 2px; border: 1px solid #bdbdbd; border-radius: 3px; display: flex; align-items: center; justify-content: space-between; padding: 0 6px 3px 13px; font-size: 14px; letter-spacing: .1px; }
.tri { width: 0; height: 0; border: 5px solid transparent; border-top-color: #757575; border-bottom: 0; }
.search-right { width: 500px; padding-top: 93px; }
.location { display: flex; height: 68px; }
.arrow { width: 14px; height: 14px; margin-top: 20px; fill: #212121; }
.near { width: 166px; margin-left: 10px; white-space: nowrap; }
.near-t { font-size: 12px; line-height: 20px; letter-spacing: -.05px; }
.near-a { font-size: 14px; line-height: 19px; letter-spacing: -.05px; }
.near-c { font-size: 13px; line-height: 22px; font-weight: 700; letter-spacing: .2px; }
.change { padding-top: 17px; font: 500 14px/18px Roboto, sans-serif; color: #316bbe; }
.tools { display: flex; align-items: center; height: 50px; margin-left: 222px; }
.heart { width: 21px; height: 18px; fill: #cf3c43; }
.fav { width: 115px; margin-left: 8px; font: 500 14px/18px Roboto, sans-serif; }
.map-l { width: 46px; font-size: 14.500px; letter-spacing: .3px; color: #316bbe; }
.toggle { width: 34px; height: 14px; border-radius: 7px; background: #808080; display: flex; align-items: center; justify-content: flex-end; }
.toggle i { width: 20px; height: 20px; border-radius: 50%; background: #fafafa; box-shadow: 0 1px 3px rgba(0,0,0,.45); }
.dots { margin-left: 36px; display: flex; flex-direction: column; gap: 2px; }
.dots i { width: 4px; height: 4px; border-radius: 50%; background: #111; }

.results { height: 624px; display: flex; background: #f4f4f4; overflow: hidden; }
.list { width: 1028px; }
.summary { height: 29px; padding: 9px 0 0 131px; display: flex; justify-content: space-between; }
.count { font-size: 13px; line-height: 18px; white-space: nowrap; }
.count b { letter-spacing: -.22px; }
.count span { color: #316bbe; letter-spacing: .13px; }
.badge { width: 177px; height: 20px; border-radius: 2px; background: #8ccb63; color: #fff; font: 500 13px/21px Roboto, sans-serif; letter-spacing: .05px; text-align: center; }
.pager { height: 69px; display: flex; padding: 18px 0 0 413px; font: 16px/20px Roboto, sans-serif; }
.rpp { width: 126px; }
.num { width: 22px; }
.pager .tri { margin-top: 6px; }
.range { width: 108px; margin-left: 34px; }
.prev, .next { width: 8px; height: 12px; margin-top: 4px; fill: none; stroke: #b8b8b8; stroke-width: 2; }
.next { margin-left: 32px; stroke: #222; }
.cards { display: flex; flex-direction: column; gap: 10px; margin-left: 137px; width: 874px; }
.card { position: relative; height: 140px; flex: none; background: #fff; border-radius: 4px; box-shadow: 0 1px 3px rgba(0,0,0,.5); padding: 6px 0 0 20px; }
.fav-o { position: absolute; right: 11px; top: 11px; width: 20px; height: 18px; fill: #cf3c43; }
.card h2 { font-size: 18px; line-height: 26px; font-weight: 600; letter-spacing: .22px; color: #316bbe; white-space: nowrap; }
.card h2.wide { letter-spacing: .42px; }
.tags { display: flex; gap: 5px; padding-top: 2px; }
.tags span { height: 18px; padding: 0 9px 0 10px; border-radius: 3px; background: #e0e0e0; color: #111; font: 500 10px/18px Roboto, sans-serif; letter-spacing: 1.320px; }
.info { display: grid; grid-template-columns: 279px 347px 1fr; }
.contact { padding-top: 12px; }
.row { display: flex; align-items: center; height: 20px; }
.row a { color: #316bbe; font: 500 14.300px/20px Roboto, sans-serif; text-decoration: underline; text-underline-offset: 2px; }
.ph { width: 20px; height: 20px; fill: #212121; margin: 2px 4px 0 -1px; }
.row.web { margin-top: 4px; }
.row.web a { font: 600 14.500px/18px "Noto Sans", sans-serif; letter-spacing: .1px; margin-top: -2px; }
.mon { width: 18px; height: 17px; margin: 2px 5px 0 0; fill: #212121; }
.accept { padding-top: 9px; height: 33px; display: flex; align-items: center; font-size: 15px; letter-spacing: .05px; }
.accept svg { width: 17px; height: 17px; margin-right: 5px; fill: #8bbe55; }
.addr { display: flex; padding-top: 10px; font: 14px/20px Roboto, sans-serif; }
.addr svg { width: 10px; height: 14px; margin: 4px 4px 0 0; fill: #212121; }
.addr a { display: block; width: max-content; text-decoration: underline; text-decoration-color: #316bbe; text-underline-offset: 2px; }
.addr b { display: block; margin-top: 12px; font-weight: 500; color: #316bbe; letter-spacing: .2px; }
.rail { width: 20px; padding: 94px 0 0 1px; }
.thumb { width: 8px; height: 95px; background: #316bbe; border: 1px solid #fff; border-radius: 2px; }

.map { position: relative; width: 504px; height: 624px; }
.canvas { width: 504px; height: 624px; }
.lg { fill: #dff1da; }
.pk { fill: #c8edbe; }
.wt { fill: #c0e2ff; }
.riv { fill: none; stroke: #b5e0fa; stroke-width: 15; }
.st path { fill: none; stroke: #fff; stroke-width: 4.500; stroke-linejoin: round; }
.st .rail-l { stroke: #d8d8da; stroke-width: 3; }
.hw path { fill: none; stroke: #fdebba; stroke-width: 11; stroke-linejoin: round; }
.pinb { fill: #316bbe; stroke: #fff; stroke-width: 2; }
.ring { fill: none; stroke: #fff; stroke-width: 4; }
.thin { stroke-width: 2; }
.shield { fill: #fff; stroke: #575a60; stroke-width: 3; }
.sh text { font: 500 27px Roboto, sans-serif; fill: #444; text-anchor: middle; }
.sh .in text { font: 700 26px "Noto Sans", sans-serif; fill: #fff; }
.nm text { font: 12px Roboto, sans-serif; fill: #4b4e57; text-anchor: middle; stroke: #fff; stroke-width: 2px; stroke-opacity: .75; paint-order: stroke; letter-spacing: .15px; }
.nm .md { font-size: 14px; }
.nm .lg-t { font-size: 18px; font-weight: 500; }
.nm .s { text-anchor: start; }
.nm .tight { letter-spacing: -.1px; }
.nm .area text { font-size: 9px; font-weight: 700; fill: #8792ab; letter-spacing: 1.200px; }
.nm .air text { font-size: 13px; fill: #1089c4; }
.nm .green text { font-size: 13px; fill: #25832c; }
.map-type { position: absolute; left: 10px; top: 9px; height: 40px; display: flex; background: #fff; border-radius: 2px; box-shadow: 0 1px 3px rgba(0,0,0,.25); font: 18px/40px Roboto, sans-serif; color: #565656; }
.map-type span { width: 99px; text-align: center; }
.map-type .on { width: 70px; font-weight: 500; color: #000; border-right: 1px solid #eee; }
.ctl { position: absolute; right: 10px; width: 40px; height: 40px; background: #fff; border-radius: 2px; box-shadow: 0 1px 3px rgba(0,0,0,.25); display: grid; place-items: center; }
.full { top: 9px; }
.full svg { width: 18px; height: 18px; fill: #666; }
.peg { bottom: 10px; }
.peg svg { width: 18px; height: 31px; }
.feedback { position: absolute; left: 1627px; top: 653px; width: 36px; height: 128px; padding: 6px 0 0 4px; background: #696969; color: #fff; display: flex; flex-direction: column; font: bold 13px/14px "Liberation Sans", Arial, sans-serif; }
.scroll { position: absolute; right: 0; top: 0; width: 3px; height: 907px; background: #f1f1f1; }
.scroll i { position: absolute; right: 0; top: 16px; width: 1px; height: 504px; background: #c1c1c1; }
```
